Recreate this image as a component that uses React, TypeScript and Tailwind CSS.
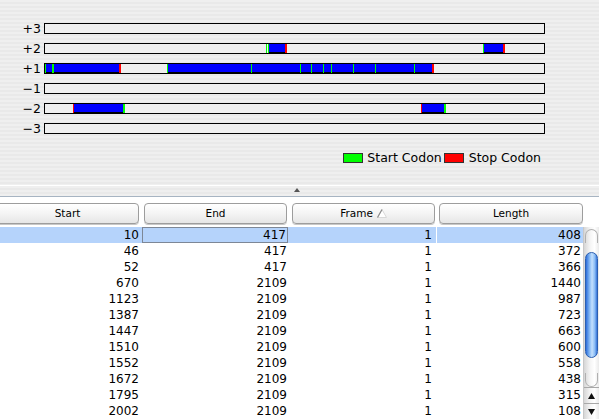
import React from 'react'

type Feature = { kind: 'orf' | 'start' | 'stop'; x: number; w: number }

// page x coordinates of the track box inner edge
const X0 = 45

const tracks: { label: string; features: Feature[] }[] = [
  { label: '+3', features: [] },
  {
    label: '+2',
    features: [
      { kind: 'orf', x: 268, w: 17 },
      { kind: 'start', x: 266, w: 1 },
      { kind: 'start', x: 268, w: 1 },
      { kind: 'stop', x: 285, w: 2 },
      { kind: 'orf', x: 483, w: 20 },
      { kind: 'start', x: 483, w: 1 },
      { kind: 'stop', x: 503, w: 2 },
    ],
  },
  {
    label: '+1',
    features: [
      { kind: 'orf', x: 45, w: 74 },
      { kind: 'start', x: 45, w: 1 },
      { kind: 'start', x: 52, w: 2 },
      { kind: 'stop', x: 119, w: 2 },
      { kind: 'orf', x: 167, w: 265 },
      ...[167, 251, 300, 311, 323, 331, 353, 375, 414].map((x) => ({ kind: 'start' as const, x, w: 1 })),
      { kind: 'stop', x: 432, w: 2 },
    ],
  },
  { label: '\u22121', features: [] },
  {
    label: '\u22122',
    features: [
      { kind: 'orf', x: 74, w: 49 },
      { kind: 'stop', x: 73, w: 1 },
      { kind: 'start', x: 123, w: 2 },
      { kind: 'orf', x: 422, w: 22 },
      { kind: 'stop', x: 421, w: 1 },
      { kind: 'start', x: 444, w: 2 },
    ],
  },
  { label: '\u22123', features: [] },
]

const rows = [
  [10, 417, 1, 408],
  [46, 417, 1, 372],
  [52, 417, 1, 366],
  [670, 2109, 1, 1440],
  [1123, 2109, 1, 987],
  [1387, 2109, 1, 723],
  [1447, 2109, 1, 663],
  [1510, 2109, 1, 600],
  [1552, 2109, 1, 558],
  [1672, 2109, 1, 438],
  [1795, 2109, 1, 315],
  [2002, 2109, 1, 108],
]

function Track({ label, features }: { label: string; features: Feature[] }) {
  return (
    <div className="flex items-center h-[11px]">
      <div className="w-[41px] text-right text-[12.5px] leading-[11px]">{label}</div>
      <div className="ml-[3px] w-[501px] h-[11px] border border-black bg-[#efefef]">
        <svg width="499" height="9" className="block">
          {features.map((f, i) =>
            f.kind === 'orf' ? (
              <g key={i}>
                <rect x={f.x - X0} y={0} width={f.w} height={8} fill="#0000ff" />
                <rect x={f.x - X0} y={8} width={f.w} height={1} fill="#000" />
              </g>
            ) : (
              <rect
                key={i}
                x={f.x - X0}
                y={0}
                width={f.w}
                height={9}
                fill={f.kind === 'start' ? '#00ff00' : '#ff0000'}
              />
            ),
          )}
        </svg>
      </div>
    </div>
  )
}

function HeaderButton({ label, className, sorted }: { label: string; className: string; sorted?: boolean }) {
  return (
    <div
      className={`h-[21px] rounded-[4px] border border-[#9d9d9d] bg-[linear-gradient(to_bottom,#ffffff,#f4f4f4_50%,#e6e6e6)] shadow-[0_1px_0_#c8c8c8] flex items-center justify-center gap-[4px] text-[10.5px] ${className}`}
    >
      <span>{label}</span>
      {sorted && (
        <svg width="10" height="9" viewBox="0 0 10 9">
          <polygon points="0.5,8.5 5,0.5 9.5,8.5" fill="#ffffff" stroke="#d8d8d8" strokeWidth="1" />
          <line x1="0.5" y1="8.5" x2="5" y2="0.5" stroke="#8a8a8a" strokeWidth="1.2" />
        </svg>
      )}
    </div>
  )
}

export default function App() {
  return (
    <div className="w-[599px] h-[419px] overflow-hidden bg-white text-black font-['DejaVu_Sans',sans-serif]">
      {/* map panel */}
      <div className="h-[185px] bg-[repeating-linear-gradient(to_bottom,#efefef_0px,#efefef_2px,#e9e9e9_2px,#e9e9e9_4px)] pt-[23px]">
        <div className="flex flex-col gap-[9px]">
          {tracks.map((t) => (
            <Track key={t.label} label={t.label} features={t.features} />
          ))}
        </div>
        <div className="mt-[19px] flex items-center justify-end pr-[58px] h-[10px] text-[12.5px] leading-[10px]">
          <div className="w-[20px] h-[10px] border border-[#333] bg-[#00ff00]" />
          <span className="ml-[4px]">Start Codon</span>
          <div className="ml-[2px] w-[20px] h-[10px] border border-[#333] bg-[#ff0000]" />
          <span className="ml-[5px]">Stop Codon</span>
        </div>
      </div>

      {/* split divider */}
      <div className="h-[12px] border-t border-white border-b border-b-[#a7b4c2] bg-[repeating-linear-gradient(to_bottom,#efefef_0px,#efefef_2px,#e9e9e9_2px,#e9e9e9_4px)] flex justify-center pl-[-6px]">
        <svg width="6" height="4" className="mt-[2px] ml-[-6px]">
          <polygon points="0,4 3,0 6,4" fill="#555" />
        </svg>
      </div>

      {/* header */}
      <div className="h-[30px] pt-[6px] flex">
        <HeaderButton label="Start" className="w-[143px] ml-[-4px]" />
        <HeaderButton label="End" className="w-[143px] ml-[5px]" />
        <HeaderButton label="Frame" sorted className="w-[143px] ml-[5px]" />
        <HeaderButton label="Length" className="w-[144px] ml-[4px]" />
      </div>

      {/* table body */}
      <div className="flex">
        <div className="w-[583px] text-[12px]">
          {rows.map((r, i) => {
            const sel = i === 0
            return (
              <div key={i} className={`h-[16px] flex items-center leading-[16px] ${sel ? 'bg-[#b5d3fb]' : ''}`}>
                <div className="w-[142px] pr-[3px] text-right">{r[0]}</div>
                <div
                  className={`w-[146px] h-[16px] pr-[1px] text-right ${sel ? 'border border-[#7d8796] leading-[14px]' : ''}`}
                >
                  {r[1]}
                </div>
                <div className="w-[148px] pr-[4px] text-right">{r[2]}</div>
                <div className={`w-[147px] pr-[2px] text-right ${sel ? 'border-l border-white' : ''}`}>{r[3]}</div>
              </div>
            )
          })}
        </div>

        {/* scrollbar */}
        <div className="w-[16px] h-[192px] flex flex-col bg-[linear-gradient(to_right,#d6d6d6,#f4f4f4_40%,#ffffff_70%,#eaeaea)] border-l border-[#c8c8c8]">
          <div className="flex-1 relative">
            <div className="absolute left-[1px] right-[1px] top-[2px] h-[14px] rounded-t-full border border-b-0 border-[#b0b0b0]" />
            <div className="absolute left-[1px] right-[1px] top-[25px] h-[106px] rounded-full border border-[#2b5fb0] bg-[linear-gradient(to_right,#2c6ddb,#7fb4f2_30%,#c4e0fd_55%,#8abcf5_80%,#3673d8)]" />
            <div className="absolute left-[1px] right-[1px] bottom-0 h-[14px] rounded-b-full border border-t-0 border-[#b0b0b0]" />
          </div>
          <div className="h-[16px] border-t border-[#a8a8a8] flex items-center justify-center">
            <svg width="7" height="6">
              <polygon points="0,6 3.5,0 7,6" fill="#111" />
            </svg>
          </div>
          <div className="h-[16px] border-t border-[#a8a8a8] flex items-center justify-center">
            <svg width="7" height="6">
              <polygon points="0,0 3.5,6 7,0" fill="#111" />
            </svg>
          </div>
        </div>
      </div>
    </div>
  )
}
